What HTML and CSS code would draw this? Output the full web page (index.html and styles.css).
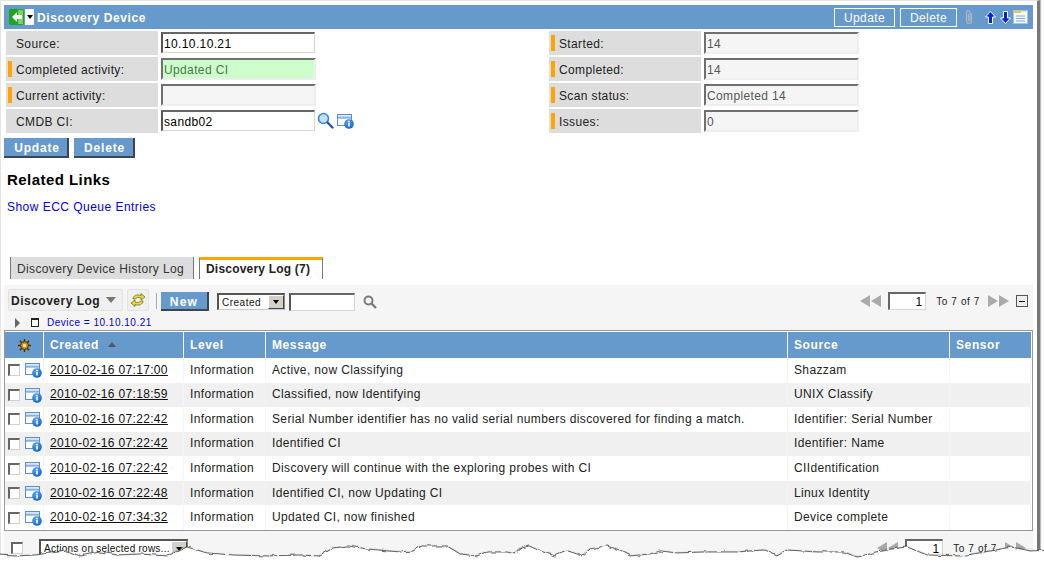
FILE: index.html
```html
<!DOCTYPE html>
<html lang="en">
<head>
<meta charset="utf-8">
<title>Discovery Device</title>
<link rel="stylesheet" href="styles.css">
</head>
<body>
<svg class="defs" width="0" height="0" aria-hidden="true">
  <defs>
    <linearGradient id="gw" x1="0" y1="0" x2="0" y2="1"><stop offset="0" stop-color="#dfeefc"/><stop offset="1" stop-color="#a9cdf0"/></linearGradient>
    <radialGradient id="gi" cx=".4" cy=".3" r=".8"><stop offset="0" stop-color="#58a6f0"/><stop offset="1" stop-color="#0b5cc0"/></radialGradient>
    <symbol id="info" viewBox="0 0 17 16">
      <rect x=".5" y="1.5" width="14" height="11" fill="#fff" stroke="#5b8fd0"/>
      <rect x="1" y="2" width="13" height="3" fill="url(#gw)"/>
      <path d="M1 5h13" stroke="#5b8fd0"/>
      <circle cx="12" cy="11" r="4.8" fill="url(#gi)"/>
      <path d="M11.2 7.8h1.6v1.4h-1.6zM11.2 10h1.6v3.6h-1.6z" fill="#fff"/>
    </symbol>
    <symbol id="lens" viewBox="0 0 17 17">
      <circle cx="6.5" cy="6.5" r="5" fill="#bfe0fb" stroke="#3d86cf" stroke-width="1.6"/>
      <path d="M10.5 10.5l5 5" stroke="#34568a" stroke-width="2.4" stroke-linecap="round"/>
    </symbol>
  </defs>
</svg>
<div class="shot">
  <div class="page">
    <header class="titlebar">
      <svg class="back" width="15" height="16" viewBox="0 0 15 16"><rect width="15" height="16" rx="2" fill="#1fa51f"/><rect x="9" y="1" width="5" height="14" fill="#78d268"/><path d="M8 3L3 8l5 5v-3h5V6H8z" fill="#fff"/></svg>
      <span class="caret"><i></i></span>
      <h1 class="title">Discovery Device</h1>
      <div class="titleactions">
        <button class="ghost ghost-update">Update</button>
        <button class="ghost">Delete</button>
        <svg class="clip" width="10" height="16" viewBox="0 0 10 16"><path d="M7.5 4v8a2.5 2.5 0 0 1-5 0V3.500a1.800 1.800 0 0 1 3.600 0V11a.8.8 0 0 1-1.600 0V5" fill="none" stroke="#a9b4c0" stroke-width="1.300"/></svg>
        <svg class="arrow arrow-first" width="11" height="13" viewBox="0 0 11 13"><path d="M5.500 .5L10.500 6H7.500v6.500h-4V6H.5z" fill="#0a22d8" stroke="#fff"/></svg>
        <svg class="arrow" width="11" height="13" viewBox="0 0 11 13"><path d="M5.500 12.500L10.500 7H7.500V.5h-4V7H.5z" fill="#0a22d8" stroke="#fff"/></svg>
        <svg class="listicon" width="15" height="14" viewBox="0 0 15 14"><rect width="15" height="14" fill="#f4f8ff"/><rect width="8" height="3" fill="#ffc433"/><rect x="8" width="7" height="2" fill="#ffe08a"/><path d="M3 6h9M3 8.500h9M3 11h9" stroke="#7ea6da"/><rect x=".5" y=".5" width="14" height="13" fill="none" stroke="#a7c4e6"/></svg>
      </div>
    </header>

    <section class="form">
      <div class="col">
        <div class="row"><label class="lab">Source:</label><input class="inp" value="10.10.10.21"></div>
        <div class="row"><label class="lab req">Completed activity:</label><input class="inp ro ok" value="Updated CI" readonly></div>
        <div class="row"><label class="lab req">Current activity:</label><input class="inp ro" value="" readonly></div>
        <div class="row"><label class="lab">CMDB CI:</label><input class="inp" value="sandb02">
          <svg class="lookup" width="17" height="17"><use href="#lens"/></svg>
          <svg class="rowinfo" width="17" height="16"><use href="#info"/></svg>
        </div>
      </div>
      <div class="col">
        <div class="row"><label class="lab req">Started:</label><input class="inp ro" value="14" readonly></div>
        <div class="row"><label class="lab req">Completed:</label><input class="inp ro" value="14" readonly></div>
        <div class="row"><label class="lab req">Scan status:</label><input class="inp ro" value="Completed 14" readonly></div>
        <div class="row"><label class="lab req">Issues:</label><input class="inp ro" value="0" readonly></div>
      </div>
    </section>

    <div class="formbtns">
      <button class="solid solid-update">Update</button>
      <button class="solid solid-delete">Delete</button>
    </div>

    <h2 class="related">Related Links</h2>
    <a class="ecc" href="#">Show ECC Queue Entries</a>

    <nav class="tabs">
      <span class="tab">Discovery Device History Log</span>
      <span class="tab active">Discovery Log (7)</span>
    </nav>

    <section class="list">
      <div class="toolbar">
        <div class="titlebtn">Discovery Log<i class="tri"></i></div>
        <div class="refresh">
          <svg width="16" height="16" viewBox="0 0 16 16"><path d="M3 7C3 3.500 7 2 11 3.500V1.500l4 3.500-4 3V6C8 5 6 5.500 5.500 7z" fill="#f6d32d" stroke="#5c7a2a" stroke-width=".8"/><path d="M13 9c0 3.500-4 5-8 3.500v2l-4-3.500 4-3v2c3 1 5 .5 5.500-1z" fill="#f6d32d" stroke="#5c7a2a" stroke-width=".8"/></svg>
        </div>
        <span class="sep"></span>
        <button class="solid newbtn">New</button>
        <div class="combo combo-field"><span>Created</span><b><i></i></b></div>
        <input class="inp search" value="">
        <svg class="searchicon" width="14" height="14" viewBox="0 0 14 14"><circle cx="5.500" cy="5.500" r="4" fill="none" stroke="#7a7a7a" stroke-width="2"/><path d="M8.500 8.500l4.500 4.500" stroke="#7a7a7a" stroke-width="2.400"/></svg>
        <div class="pager">
          <span class="tri-l"></span><span class="tri-l tight"></span>
          <input class="pageno" value="1">
          <span class="pagetext">To 7 of 7</span>
          <span class="tri-r"></span><span class="tri-r tight"></span>
          <span class="collapse"><i></i></span>
        </div>
      </div>
      <div class="crumbs">
        <i class="expand"></i>
        <i class="doc"></i>
        <a class="crumb" href="#">Device = 10.10.10.21</a>
      </div>
      <table class="grid">
        <colgroup>
          <col class="c-sel"><col class="c-created"><col class="c-level"><col class="c-msg"><col class="c-src"><col class="c-sensor">
        </colgroup>
        <thead>
          <tr>
            <th class="gear"><svg width="13" height="13" viewBox="0 0 14 14"><g stroke="#4a3000" stroke-width="1.500"><path d="M7 0v14M0 7h14M2 2l10 10M12 2L2 12"/></g><circle cx="7" cy="7" r="4.300" fill="#c98a14" stroke="#4a3000"/><circle cx="7" cy="7" r="1.800" fill="#ffe9a0"/></svg></th>
            <th>Created<i class="sort"></i></th><th>Level</th><th>Message</th><th>Source</th><th>Sensor</th>
          </tr>
        </thead>
        <tbody>
          <tr><td class="sel"><span class="chk"></span><svg width="17" height="16"><use href="#info"/></svg></td><td><a class="dt" href="#">2010-02-16 07:17:00</a></td><td>Information</td><td>Active, now Classifying</td><td>Shazzam</td><td></td></tr>
          <tr><td class="sel"><span class="chk"></span><svg width="17" height="16"><use href="#info"/></svg></td><td><a class="dt" href="#">2010-02-16 07:18:59</a></td><td>Information</td><td>Classified, now Identifying</td><td>UNIX Classify</td><td></td></tr>
          <tr><td class="sel"><span class="chk"></span><svg width="17" height="16"><use href="#info"/></svg></td><td><a class="dt" href="#">2010-02-16 07:22:42</a></td><td>Information</td><td>Serial Number identifier has no valid serial numbers discovered for finding a match.</td><td>Identifier: Serial Number</td><td></td></tr>
          <tr><td class="sel"><span class="chk"></span><svg width="17" height="16"><use href="#info"/></svg></td><td><a class="dt" href="#">2010-02-16 07:22:42</a></td><td>Information</td><td>Identified CI</td><td>Identifier: Name</td><td></td></tr>
          <tr><td class="sel"><span class="chk"></span><svg width="17" height="16"><use href="#info"/></svg></td><td><a class="dt" href="#">2010-02-16 07:22:42</a></td><td>Information</td><td>Discovery will continue with the exploring probes with CI</td><td>CIIdentification</td><td></td></tr>
          <tr><td class="sel"><span class="chk"></span><svg width="17" height="16"><use href="#info"/></svg></td><td><a class="dt" href="#">2010-02-16 07:22:48</a></td><td>Information</td><td>Identified CI, now Updating CI</td><td>Linux Identity</td><td></td></tr>
          <tr><td class="sel"><span class="chk"></span><svg width="17" height="16"><use href="#info"/></svg></td><td><a class="dt" href="#">2010-02-16 07:34:32</a></td><td>Information</td><td>Updated CI, now finished</td><td>Device complete</td><td></td></tr>
        </tbody>
      </table>
      <div class="listfoot">
        <span class="chk chk-foot"></span>
        <div class="combo combo-actions"><span>Actions on selected rows...</span><b><i></i></b></div>
        <div class="pager pager-foot">
          <span class="tri-l"></span><span class="tri-l tight"></span>
          <input class="pageno" value="1">
          <span class="pagetext">To 7 of 7</span>
          <span class="tri-r"></span><span class="tri-r tight"></span>
        </div>
      </div>
    </section>
  </div>

  <svg class="tear" width="1044" height="40" viewBox="0 528 1044 40" aria-hidden="true">
    <defs>
      <filter id="soft" x="-2%" y="-50%" width="104%" height="200%"><feGaussianBlur stdDeviation="1"/></filter>
      <filter id="rough" filterUnits="userSpaceOnUse" x="-10" y="528" width="1064" height="40"><feTurbulence type="fractalNoise" baseFrequency=".14" numOctaves="2" seed="4"/><feDisplacementMap in="SourceGraphic" scale="4" xChannelSelector="R" yChannelSelector="G"/></filter>
    </defs>
    <g filter="url(#rough)">
      <path class="tear-blur" filter="url(#soft)" d="M-5 557L15 558 35 557 50 555 67 553 80 558 100 554 117 557 140 556 167 558 187 549 207 555 233 557 267 558 300 557 320 558 333 550 347 548 367 551 400 554 413 553 422 548 447 548 460 556 477 558 487 554 507 554 515 556 522 550 529 548 540 553 555 558 567 553 582 558 590 551 607 548 620 553 630 558 650 556 661 553 677 555 702 554 737 554 764 552 777 558 787 552 817 554 844 554 857 559 877 554 892 551 907 549 927 557 961 558 991 553 1011 549 1031 553 1050 552"/>
      <path class="tear-fill" d="M-5 555L15 556 35 555 50 553 67 551 80 556 100 552 117 555 140 554 167 556 187 547 207 553 233 555 267 556 300 555 320 556 333 548 347 546 367 549 400 552 413 551 422 546 447 546 460 554 477 556 487 552 507 552 515 554 522 548 529 546 540 551 555 556 567 551 582 556 590 549 607 546 620 551 630 556 650 554 661 551 677 553 702 552 737 552 764 550 777 556 787 550 817 552 844 552 857 557 877 552 892 549 907 547 927 555 961 556 991 551 1011 547 1031 551 1050 550V590H-5Z"/>
    </g>
  </svg>
</div>
</body>
</html>
```

FILE: styles.css
```css
* { box-sizing: border-box; }
html, body { margin: 0; padding: 0; background: #fff; }
body { font-family: "Liberation Sans", Arial, sans-serif; font-size: 12px; color: #222; letter-spacing: .37px; overflow: hidden; }
.defs { position: absolute; }
button { font: inherit; letter-spacing: inherit; padding: 0; margin: 0; }

.shot { position: relative; width: 1044px; height: 568px; overflow: hidden; }
.page { width: 1040px; height: 568px; padding: 4px 0 0 3px; border-top: 1px solid #e4e4e4; border-left: 1px solid #e4e4e4; border-right: 3px solid #777; box-shadow: 1px 0 1px #bbb; }

.titlebar { display: flex; align-items: center; width: 1029px; height: 24px; background: #6699cc; padding-left: 5px; }
.back { display: block; flex: none; }
.caret { width: 9px; height: 16px; background: #fff; display: flex; align-items: center; justify-content: center; margin-left: 1px; flex: none; }
.caret i { border: 3.5px solid transparent; border-top: 4px solid #000; border-bottom: 0; }
.title { margin: 0 0 0 3px; padding-top: 1px; font-size: 12px; font-weight: bold; color: #fff; letter-spacing: .6px; }
.titleactions { margin-left: auto; display: flex; align-items: center; padding-right: 5px; }
.ghost { height: 19px; width: 57px; background: transparent; border: 1px solid #fff; color: #fff; font-size: 12px; padding-top: 1px; }
.ghost-update { width: 61px; margin-right: 5px; }
.clip { margin-left: 7px; }
.arrow { margin-left: 4px; }
.arrow-first { margin-left: 11px; }
.listicon { margin-left: 2px; }

.form { display: flex; padding: 2px 0 0 2px; }
.col { width: 543px; flex: none; display: flex; flex-direction: column; gap: 2px; }
.row { display: flex; align-items: flex-start; height: 24px; }
.lab { width: 152px; height: 24px; background: #dddddd; padding-left: 10px; line-height: 26px; position: relative; color: #222; flex: none; }
.lab.req::before { content: ""; position: absolute; left: 2px; top: 4px; width: 4px; height: 16px; background: #ffa500; }
.inp { font: inherit; letter-spacing: inherit; color: #000; width: 154px; height: 21px; margin: 1px 0 0 3px; padding: 1px 1px 0; background: #fff; border: 2px solid; border-color: #666 #d8d6cc #d8d6cc #555; border-width: 2px 1px 1px 2px; outline: none; flex: none; }
.inp.ro { width: 155px; height: 22px; background: #f5f5f5; color: #555; border-color: #707070 #eeeeee #eeeeee #707070; border-width: 2px; }
.inp.ok { background: #ccffcc; color: #4a7a4a; }
.lookup { margin: 3px 0 0 2px; }
.rowinfo { margin: 4px 0 0 3px; }

.formbtns { display: flex; gap: 5px; margin-top: 5px; }
.solid { background: #6699cc; color: #fff; font-weight: bold; font-size: 12px; border: 0; border-right: 2px solid #3c4650; border-bottom: 2px solid #3c4650; letter-spacing: .8px; height: 20px; padding-top: 2px; }
.solid-update { width: 65px; padding-left: 3px; }
.solid-delete { width: 61px; padding-left: 2px; }

.related { margin: 13px 0 0 3px; font-size: 15px; line-height: 17px; font-weight: bold; color: #000; letter-spacing: .45px; }
.ecc { display: block; margin: 12px 0 0 3px; color: #0000e0; text-decoration: none; line-height: 14px; letter-spacing: .47px; }

.tabs { display: flex; gap: 5px; height: 22px; margin: 43px 0 0 6px; align-items: flex-end; }
.tab { height: 22px; padding: 0 6px; width: 184px; background: #dddddd; border-left: 1px solid #777; border-right: 1px solid #777; line-height: 25px; white-space: nowrap; color: #333; }
.tab.active { width: 124px; background: #fff; border-top: 3px solid #ffa500; line-height: 19px; font-weight: bold; color: #222; letter-spacing: .2px; }

.list { position: relative; margin-top: 6px; width: 1029px; height: 300px; background: #f5f5f5; }
.toolbar { display: flex; align-items: flex-start; height: 30px; padding: 4px 0 0 4px; }
.titlebtn { width: 115px; height: 22px; background: #efefef; border: 1px solid #e3e3e3; border-radius: 2px; font-weight: bold; line-height: 22px; padding: 1px 0 0 2px; color: #222; letter-spacing: .5px; display: flex; align-items: center; }
.tri { margin: -1px 0 0 6px; border: 5px solid transparent; border-top: 6px solid #777; border-bottom: 0; }
.refresh { width: 22px; height: 22px; margin-left: 4px; background: #efefef; border: 1px solid #e3e3e3; border-radius: 2px; display: flex; align-items: center; justify-content: center; }
.sep { width: 1px; height: 16px; margin: 4px 0 0 7px; background: #aaa; }
.newbtn { width: 48px; height: 19px; margin: 3px 0 0 4px; letter-spacing: 1.2px; }
.combo { display: flex; align-items: center; background: #fff; border: 1px solid #555; border-color: #555 #888 #ccc #555; border-width: 2px 1px 1px 2px; }
.combo span { flex: 1; padding-left: 3px; font-size: 10px; white-space: nowrap; overflow: hidden; color: #111; letter-spacing: .5px; }
.combo b { width: 16px; height: 100%; background: #d4d0c8; border: 1px solid; border-color: #fff #444 #444 #fff; display: flex; align-items: center; justify-content: center; flex: none; }
.combo b i { border: 3.5px solid transparent; border-top: 4px solid #000; border-bottom: 0; }
.combo-field { width: 68px; height: 17px; margin: 4px 0 0 8px; }
.inp.search { width: 66px; height: 18px; margin: 4px 0 0 4px; }
.searchicon { margin: 6px 0 0 8px; }

.pager { margin-left: auto; display: flex; align-items: center; height: 18px; margin-top: 3px; padding-right: 5px; }
.tri-l { width: 0; height: 0; border: 6px solid transparent; border-right: 10px solid #aaa; border-left: 0; }
.tri-r { width: 0; height: 0; border: 6px solid transparent; border-left: 10px solid #aaa; border-right: 0; }
.tri-l.tight, .tri-r.tight { margin-left: 1px; }
.pageno { font: inherit; width: 38px; height: 18px; margin-left: 7px; padding: 0 3px; text-align: right; border: 2px solid; border-color: #666 #d8d6cc #d8d6cc #666; border-width: 2px 1px 1px 2px; background: #fff; color: #000; outline: none; }
.pagetext { font-size: 10px; margin: 0 8px 0 10px; letter-spacing: .6px; color: #222; white-space: nowrap; }
.collapse { width: 12px; height: 12px; margin-left: 7px; border: 1px solid #555; background: #eee; display: flex; align-items: center; justify-content: center; }
.collapse i { width: 6px; height: 1px; background: #000; }

.crumbs { display: flex; align-items: center; height: 15px; padding-left: 11px; }
.expand { border: 5px solid transparent; border-left: 5px solid #666; border-right: 0; }
.doc { width: 8px; height: 9px; margin-left: 11px; border: 1px solid #222; border-top-width: 2px; background: #fff; }
.crumb { margin-left: 8px; font-size: 10px; color: #0000e0; text-decoration: none; letter-spacing: .5px; }

.grid { border-collapse: separate; border-spacing: 0; table-layout: fixed; width: 1029px; height: 201px; border: 1px solid #999; padding: 1px 1px 0 0; background: #fff; }
.c-sel { width: 39px; }
.c-created { width: 140px; }
.c-level { width: 82px; }
.c-msg { width: 522px; }
.c-src { width: 162px; }
.grid th { height: 26px; background: #6699cc; color: #fff; text-align: left; padding: 0 0 0 6px; border-right: 1px solid #fff; font-size: 12px; letter-spacing: .6px; }
.grid th:last-child { border-right: 0; }
.grid th.gear { padding: 0; text-align: center; }
.gear svg { display: block; margin: 0 auto; }
.sort { display: inline-block; margin-left: 9px; border: 4px solid transparent; border-bottom: 5px solid #556; border-top: 0; vertical-align: 2px; }
.grid td { padding: 0 0 1px 6px; border-right: 1px solid #f5f5f5; color: #222; white-space: nowrap; overflow: hidden; }
.grid tbody tr:nth-child(even) td { background: #f0f0f0; }
.grid td.sel { padding: 0 0 0 3px; }
.sel { line-height: 0; }
.sel svg { vertical-align: middle; margin-left: 5px; }
.chk { display: inline-block; width: 12px; height: 12px; background: #fff; border: 2px solid; border-color: #666 #d4d0c8 #d4d0c8 #666; border-width: 2px 1px 1px 2px; vertical-align: middle; }
.dt { color: #111; text-decoration: underline; letter-spacing: .34px; }

.listfoot { display: flex; align-items: flex-start; padding: 8px 0 0 7px; height: 40px; }
.chk-foot { margin-top: 3px; }
.combo-actions { width: 149px; height: 18px; margin-left: 16px; }
.combo-actions span { letter-spacing: .25px; overflow: visible; }
.pager-foot { margin-top: 0; padding-right: 7px; }

.tear { position: absolute; left: 0; top: 528px; display: block; }
.tear-blur { fill: none; stroke: #222; stroke-width: 2.5; }
.tear-fill { fill: #fff; stroke: #444; stroke-width: .8; }
```
